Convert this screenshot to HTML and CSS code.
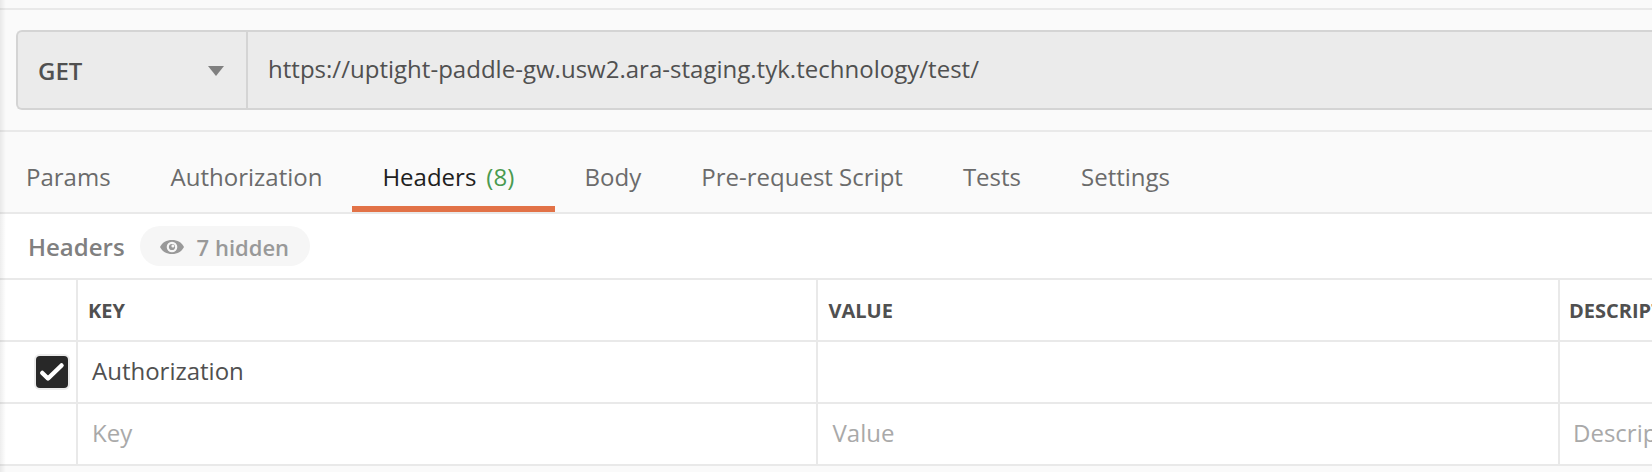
FILE: index.html
```html
<!DOCTYPE html>
<html lang="en">
<head>
<meta charset="utf-8">
<title>Request builder</title>
<link rel="stylesheet" href="styles.css">
</head>
<body>
<main class="builder">
  <section class="request">
    <div class="request-bar">
      <div class="method">
        <span class="method-name">GET</span>
        <svg class="caret" width="16" height="10" viewBox="0 0 16 10"><path d="M0 0h16L8 10z" fill="#808080"/></svg>
      </div>
      <div class="url">https://uptight-paddle-gw.usw2.ara-staging.tyk.technology/test/</div>
    </div>
  </section>
  <nav class="tabs">
    <span class="tab">Params</span>
    <span class="tab">Authorization</span>
    <span class="tab tab-active">Headers<span class="count">(8)</span></span>
    <span class="tab">Body</span>
    <span class="tab">Pre-request Script</span>
    <span class="tab">Tests</span>
    <span class="tab">Settings</span>
  </nav>
  <section class="section-head">
    <span class="section-title">Headers</span>
    <span class="pill">
      <svg class="eye" width="24" height="14" viewBox="0 0 24 14"><path d="M0 7C2.200 2.500 6.500 0 12 0s9.800 2.500 12 7c-2.200 4.500-6.500 7-12 7S2.200 11.500 0 7z" fill="#999"/><circle cx="12" cy="7" r="5.300" fill="#f6f6f6"/><circle cx="12" cy="7" r="3.100" fill="#999"/><circle cx="12.900" cy="5.900" r="1.500" fill="#f6f6f6"/></svg>
      <span class="pill-text">7 hidden</span>
    </span>
  </section>
  <section class="grid">
    <div class="cell"></div>
    <div class="cell head">KEY</div>
    <div class="cell head">VALUE</div>
    <div class="cell head">DESCRIPTION</div>
    <div class="cell check-cell">
      <svg class="checkbox" width="36" height="36" viewBox="0 0 36 36"><rect width="36" height="36" rx="6" fill="#ececec"/><rect x="2" y="2" width="32" height="32" rx="4" fill="#282828"/><path d="M8.300 19l5.700 5.500L27.500 11.500" fill="none" stroke="#fff" stroke-width="4.500" stroke-linecap="round" stroke-linejoin="round"/></svg>
    </div>
    <div class="cell value">Authorization</div>
    <div class="cell value"></div>
    <div class="cell value"></div>
    <div class="cell"></div>
    <div class="cell value placeholder">Key</div>
    <div class="cell value placeholder">Value</div>
    <div class="cell value placeholder">Description</div>
  </section>
  <div class="edge-shadow"></div>
</main>
</body>
</html>
```
FILE: styles.css
```css
* {
  box-sizing: border-box;
}

body {
  margin: 0;
  background: #fafafa;
  color: #505050;
  font: 24px/32px "Open Sans", "Noto Sans", sans-serif;
}

.builder {
  position: relative;
  height: 472px;
  padding-top: 8px;
  overflow: hidden;
  white-space: nowrap;
}

.request {
  height: 124px;
  padding: 20px 0 0 16px;
  border-top: 2px solid #e9e9e9;
  border-bottom: 2px solid #e9e9e9;
}

.request-bar {
  display: flex;
  height: 80px;
  background: #ebebeb;
  border: 2px solid #d4d4d4;
  border-right: 0;
  border-radius: 6px 0 0 6px;
}

.method {
  display: flex;
  align-items: center;
  justify-content: space-between;
  width: 230px;
  padding: 2px 22px 0 20px;
  border-right: 2px solid #d4d4d4;
  font-weight: 600;
}

.url {
  padding: 21px 0 0 20px;
  letter-spacing: .016px;
}

.tabs {
  display: flex;
  height: 82px;
  border-bottom: 2px solid #e9e9e9;
  color: #6b6b6b;
}

.tab {
  padding: 29px 30px 0;
  border-bottom: 6px solid transparent;
}

.tab:first-child {
  padding-left: 26px;
}

.tab-active {
  padding-right: 40.4px;
  color: #202020;
  border-color: #e27247;
}

.count {
  margin-left: 10px;
  color: #4a9a50;
}

.section-head {
  display: flex;
  align-items: center;
  gap: 15px;
  height: 66px;
  padding: 0 0 0 28px;
  background: #fff;
  border-bottom: 2px solid #e9e9e9;
  font-weight: 600;
}

.section-title {
  padding-top: 2px;
  color: #808080;
}

.pill {
  display: flex;
  align-items: center;
  gap: 13px;
  width: 170px;
  height: 40px;
  padding-left: 20px;
  background: #f6f6f6;
  border-radius: 20px;
  color: #999;
  font-size: 22px;
}

.eye {
  margin-top: 2px;
}

.pill-text {
  padding-top: 2px;
}

.grid {
  display: grid;
  grid-template-columns: 78px 740px 742px 92px;
  grid-auto-rows: 62px;
  background: #fff;
}

.cell {
  display: flex;
  align-items: center;
  border-right: 2px solid #e9e9e9;
  border-bottom: 2px solid #e9e9e9;
}

.cell:nth-child(4n) {
  border-right: 0;
}

.head {
  padding: 2px 0 0 10px;
  font-size: 20px;
  font-weight: 700;
}

.value {
  padding: 0 0 2px 14px;
}

.cell:nth-child(4n + 3) {
  padding-left: 14.5px;
}

.cell:nth-child(4n) {
  padding-left: 13px;
}

.head:nth-child(3) {
  padding-left: 10.5px;
}

.head:nth-child(4) {
  padding-left: 9px;
}

.placeholder {
  color: #a9a9a9;
}

.check-cell {
  padding-left: 34px;
}

.edge-shadow {
  position: absolute;
  inset: 0 auto 0 0;
  width: 6px;
  background: linear-gradient(to right, rgba(0, 0, 0, .07), rgba(0, 0, 0, 0));
}
```
